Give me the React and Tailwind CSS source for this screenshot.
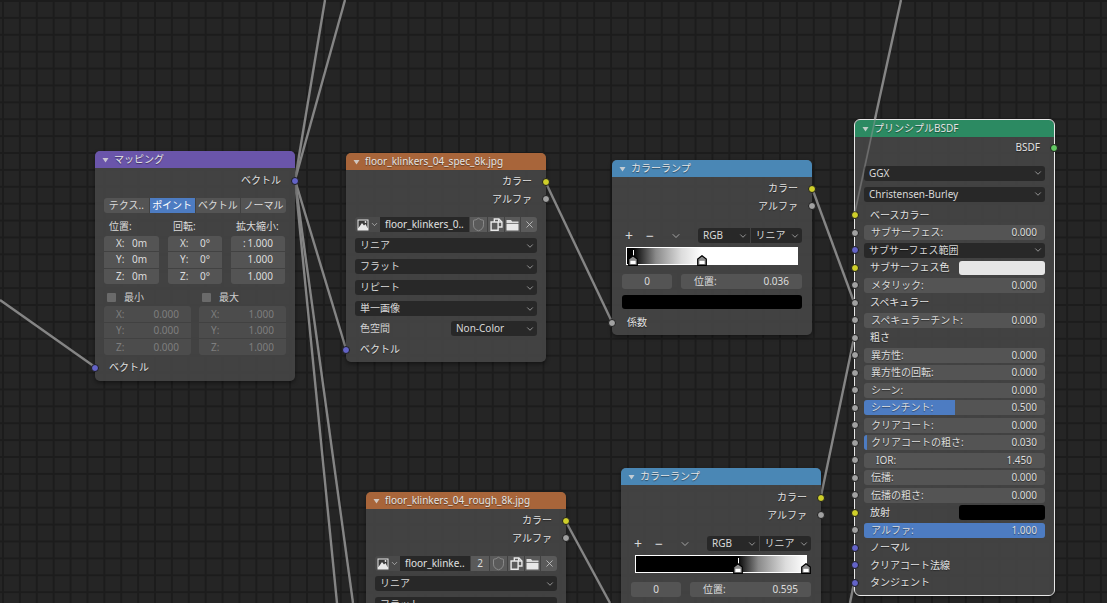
import React from "react";
import { ChevronDown, Shield, X } from "lucide-react";

const font = "font-['Noto_Sans','Noto_Sans_CJK_JP',sans-serif]";

function Tri() {
  return (
    <svg width="7" height="6" viewBox="0 0 7 6" className="shrink-0">
      <polygon points="0.5,1 6.5,1 3.5,5.5" fill="#d8d8d8" fillOpacity="0.85" />
    </svg>
  );
}

function Header({ color, title }) {
  return (
    <div className={`flex h-[17px] shrink-0 items-center gap-[5px] rounded-t-[5px] pl-[7px] text-[10px] text-[#e4e4e4] [text-shadow:0_1px_1px_rgba(0,0,0,0.45)] ${color}`}>
      <Tri />
      <span className="whitespace-nowrap">{title}</span>
    </div>
  );
}

function Socket({ side, color }) {
  const pos = side === "in" ? "left-[-4px]" : "right-[-4px]";
  return <span className={`absolute top-1/2 z-10 h-[8px] w-[8px] -translate-y-1/2 rounded-full border border-[#1e1e1e] ${pos} ${color}`} />;
}

const Y = "bg-[#cfcf2a]";
const G = "bg-[#a1a1a1]";
const B = "bg-[#6363c7]";
const GR = "bg-[#63c763]";

function Row({ side, color, className = "", children }) {
  return (
    <div className={`relative flex h-[17.5px] shrink-0 items-center px-[9px] text-[10px] text-[#e2e2e2] [text-shadow:0_1px_1px_rgba(0,0,0,0.45)] ${className}`}>
      {side && <Socket side={side} color={color} />}
      {children}
    </div>
  );
}

function Out({ label, color, pad = "pr-[14px]" }) {
  return (
    <Row side="out" color={color} className={`justify-end ${pad}`}>
      <span>{label}</span>
    </Row>
  );
}

function Drop({ label, className = "" }) {
  return (
    <div className={`flex h-[15px] items-center justify-between rounded-[3px] bg-[#282828] pl-[5px] pr-[2px] text-[10px] text-[#d8d8d8] ${className}`}>
      <span className="whitespace-nowrap">{label}</span>
      <ChevronDown size={10} strokeWidth={1.6} className="shrink-0 text-[#c8c8c8]" />
    </div>
  );
}

function Field({ label, value, fill, className = "", pad = "pl-[7px] pr-[8px]" }) {
  return (
    <div className={`relative flex h-[15px] w-full items-center justify-between overflow-hidden rounded-[3px] bg-[#545454] text-[10px] text-[#dcdcdc] ${pad} ${className}`}>
      {fill && <span className={`absolute inset-y-0 left-0 bg-[#4d7cc2] ${fill}`} />}
      <span className="relative whitespace-nowrap">{label}</span>
      <span className="relative">{value}</span>
    </div>
  );
}

function Stack({ cells, dim }) {
  return (
    <div className="flex flex-col gap-px overflow-hidden rounded-[3px]">
      {cells.map((c, i) => (
        <div key={i} className={`flex h-[15.6px] items-center justify-between px-[12px] text-[10px] ${dim ? "bg-[#4c4c4c] text-[#7e7e7e]" : "bg-[#545454] text-[#dcdcdc]"}`}>
          <span>{c[0]}</span>
          <span className="pr-0">{c[1]}</span>
        </div>
      ))}
    </div>
  );
}

function ImgIcon() {
  return (
    <svg width="12" height="12" viewBox="0 0 12 12">
      <rect x="0.5" y="0.5" width="11" height="11" fill="#e8e8e8" />
      <rect x="1.5" y="1.5" width="9" height="7.5" fill="#3a3a3a" />
      <polygon points="1.5,9 5,4 7,6.5 8.5,5 10.5,9" fill="#e8e8e8" />
      <circle cx="8.5" cy="3" r="0.9" fill="#e8e8e8" />
    </svg>
  );
}

function CopyIcon() {
  return (
    <svg width="13" height="13" viewBox="0 0 12 12" fill="none" stroke="#e8e8e8" strokeWidth="1.3">
      <path d="M1 3.7h6.5v7.6H1z" />
      <path d="M4 3.7V0.9h4.2l2.8 2.8v4.6H7.5" />
      <path d="M8 0.9v2.8h3" />
    </svg>
  );
}

function FolderIcon() {
  return (
    <svg width="13" height="12" viewBox="0 0 13 12">
      <path d="M0.5 1h4.5l1.2 1.5h6.3v1.5H0.5z" fill="#dcdcdc" />
      <path d="M0.5 4.8h12V11.5H0.5z" fill="#e8e8e8" />
    </svg>
  );
}

function ImageRow({ name, users, nameW }) {
  const btn = "flex h-[15px] items-center justify-center bg-[#5a5a5a]";
  return (
    <div className="flex h-[15px] overflow-hidden rounded-[3px] text-[10px]">
      <div className="flex w-[25px] items-center justify-center gap-px bg-[#4a4a4a]">
        <ImgIcon />
        <ChevronDown size={9} strokeWidth={1.6} className="text-[#d8d8d8]" />
      </div>
      <div className={`flex items-center bg-[#282828] pl-[5px] text-[#e0e0e0] whitespace-nowrap ${nameW}`}>{name}</div>
      {users && <div className={`${btn} ml-px w-[18px] text-[#dcdcdc]`}>{users}</div>}
      <div className={`${btn} ml-px w-[17px]`}><Shield size={15} strokeWidth={1.2} className="text-[#9a9a9a]" /></div>
      <div className={`${btn} ml-px w-[16px]`}><CopyIcon /></div>
      <div className={`${btn} ml-px w-[15px]`}><FolderIcon /></div>
      <div className={`${btn} ml-px flex-1`}><X size={11} strokeWidth={1.8} className="text-[#c8c8c8]" /></div>
    </div>
  );
}

function Handle({ className, active }) {
  return (
    <span className={`absolute bottom-[-2px] flex w-[10px] flex-col items-center ${className}`}>
      {active && <span className="mb-[-1px] h-[6px] border-l border-dashed border-white" />}
      <svg width="10" height="11" viewBox="0 0 10 11">
        <path d="M5 0.7 L9.3 4 V10.3 H0.7 V4 Z" fill="#8a8a8a" stroke="#000" strokeWidth="1.2" />
        <rect x="2.4" y="5.8" width="5.2" height="3.2" fill="#fff" />
      </svg>
    </span>
  );
}

function RampControls({ gradient, h1, h2, pos, top }) {
  return (
    <>
      <div className={`flex h-[15px] items-center px-[10px] text-[#d8d8d8] ${top}`}>
        <div className="flex w-[76px] items-center">
          <span className="w-[20px] pl-[3px] text-[14px] leading-none">+</span>
          <span className="w-[26px] pl-[4px] text-[14px] leading-none">−</span>
          <ChevronDown size={12} strokeWidth={1.6} className="ml-[2px] text-[#bdbdbd]" />
        </div>
        <div className="flex flex-1 gap-px">
          <Drop label="RGB" className="flex-1 rounded-r-none" />
          <Drop label="リニア" className="flex-1 rounded-l-none" />
        </div>
      </div>
      <div className="mx-[14px] mt-[4px]">
        <div className={`relative h-[18px] border border-white ${gradient}`}>
          {h1}
          {h2}
        </div>
      </div>
      <div className="mt-[9px] flex gap-[9px] px-[10px]">
        <div className="flex h-[15px] w-[50px] items-center justify-center rounded-[3px] bg-[#545454] text-[10px] text-[#dcdcdc]">0</div>
        <div className="flex-1"><Field label="位置:" value={pos} pad="px-[13px]" /></div>
      </div>
    </>
  );
}

function Node({ className, selected, children }) {
  return (
    <div className={`absolute z-10 flex flex-col rounded-[5px] bg-[#434343]/95 shadow-[0_2px_4px_rgba(0,0,0,0.45)] ${selected ? "outline outline-1 outline-[#e8e8e8]" : ""} ${className}`}>
      {children}
    </div>
  );
}

function Mapping() {
  const seg = "flex h-[15px] flex-1 items-center justify-center whitespace-nowrap text-[10px]";
  return (
    <Node className="left-[95px] top-[151px] h-[230px] w-[200px]">
      <Header color="bg-[#6a55aa]" title="マッピング" />
      <div className="mt-[4px]"><Out label="ベクトル" color={B} /></div>
      <div className="mx-[9px] mt-[8px] flex gap-px overflow-hidden rounded-[3px] text-[#dcdcdc]">
        <div className={`${seg} bg-[#545454]`}>テクス..</div>
        <div className={`${seg} bg-[#4d7cc2] text-white`}>ポイント</div>
        <div className={`${seg} bg-[#545454]`}>ベクトル</div>
        <div className={`${seg} bg-[#545454]`}>ノーマル</div>
      </div>
      <div className="mt-[6px] grid grid-cols-[55px_54px_54px] gap-x-[9px] px-[9px] text-[10px] text-[#dcdcdc]">
        <span className="h-[17px] pl-[5px] leading-[15px]">位置:</span>
        <span className="h-[17px] pl-[5px] leading-[15px]">回転:</span>
        <span className="h-[17px] whitespace-nowrap pl-[5px] leading-[15px]">拡大縮小:</span>
        <Stack cells={[["X:", "0m"], ["Y:", "0m"], ["Z:", "0m"]]} />
        <Stack cells={[["X:", "0°"], ["Y:", "0°"], ["Z:", "0°"]]} />
        <Stack cells={[[":", "1.000"], ["", "1.000"], ["", "1.000"]]} />
      </div>
      <div className="mt-[6px] grid grid-cols-2 gap-x-[8px] px-[9px] text-[10px] text-[#cfcfcf]">
        <div className="flex h-[15px] items-center gap-[8px] pl-[3px]"><span className="h-[9px] w-[9px] rounded-[1px] bg-[#6a6a6a]" />最小</div>
        <div className="flex h-[15px] items-center gap-[8px] pl-[3px]"><span className="h-[9px] w-[9px] rounded-[1px] bg-[#6a6a6a]" />最大</div>
      </div>
      <div className="mt-[1px] grid grid-cols-2 gap-x-[8px] px-[9px]">
        <Stack dim cells={[["X:", "0.000"], ["Y:", "0.000"], ["Z:", "0.000"]]} />
        <Stack dim cells={[["X:", "1.000"], ["Y:", "1.000"], ["Z:", "1.000"]]} />
      </div>
      <div className="mt-[4px]"><Row side="in" color={B} className="pl-[14px]">ベクトル</Row></div>
    </Node>
  );
}

function SpecTexture() {
  return (
    <Node className="left-[346px] top-[153px] h-[209px] w-[200px]">
      <Header color="bg-[#a8653a]" title="floor_klinkers_04_spec_8k.jpg" />
      <div className="mt-[3px]"><Out label="カラー" color={Y} /></div>
      <Out label="アルファ" color={G} />
      <div className="mx-[9px] mt-[9px]"><ImageRow name="floor_klinkers_0.." nameW="w-[89px]" /></div>
      <div className="mx-[9px] mt-[6px] flex flex-col gap-[6px]">
        <Drop label="リニア" />
        <Drop label="フラット" />
        <Drop label="リピート" />
        <Drop label="単一画像" />
      </div>
      <div className="mx-[9px] mt-[5px] flex items-center justify-between text-[10px] text-[#d0d0d0]">
        <span className="pl-[5px]">色空間</span>
        <Drop label="Non-Color" className="w-[86px]" />
      </div>
      <div className="mt-[5px]"><Row side="in" color={B} className="pl-[14px]">ベクトル</Row></div>
    </Node>
  );
}

function RoughTexture() {
  return (
    <Node className="left-[366px] top-[492px] h-[130px] w-[200px]">
      <Header color="bg-[#a8653a]" title="floor_klinkers_04_rough_8k.jpg" />
      <div className="mt-[3px]"><Out label="カラー" color={Y} /></div>
      <Out label="アルファ" color={G} />
      <div className="mx-[9px] mt-[9px]"><ImageRow name="floor_klinke.." users="2" nameW="w-[70px]" /></div>
      <div className="mx-[9px] mt-[5px] flex flex-col gap-[6px]">
        <Drop label="リニア" />
        <Drop label="フラット" />
      </div>
    </Node>
  );
}

function RampTop() {
  return (
    <Node className="left-[612px] top-[160px] h-[175px] w-[200px]">
      <Header color="bg-[#4a87b5]" title="カラーランプ" />
      <div className="mt-[3px]"><Out label="カラー" color={Y} /></div>
      <Out label="アルファ" color={G} />
      <RampControls
        top="mt-[13px]"
        pos="0.036"
        gradient="bg-[linear-gradient(90deg,#000_3.6%,#8a8a8a_17%,#dcdcdc_32%,#fff_44%)]"
        h1={<Handle active className="left-[1px]" />}
        h2={<Handle className="left-[70px]" />}
      />
      <div className="mx-[10px] mt-[6px] h-[14px] rounded-[3px] bg-black" />
      <div className="mt-[5px]"><Row side="in" color={G} className="pl-[15px]">係数</Row></div>
    </Node>
  );
}

function RampBottom() {
  return (
    <Node className="left-[621px] top-[468px] h-[160px] w-[200px]">
      <Header color="bg-[#4a87b5]" title="カラーランプ" />
      <div className="mt-[4px]"><Out label="カラー" color={Y} /></div>
      <Out label="アルファ" color={G} />
      <RampControls
        top="mt-[12px]"
        pos="0.595"
        gradient="bg-[linear-gradient(90deg,#000_59.5%,#8a8a8a_72%,#dcdcdc_88%,#fff_100%)]"
        h1={<Handle active className="left-[97px]" />}
        h2={<Handle className="right-[-5px]" />}
      />
    </Node>
  );
}

function Bsdf() {
  const f = (label, value, fill, pad) => <Field label={label} value={value} fill={fill} pad={pad} />;
  return (
    <Node selected className="left-[855px] top-[120px] h-[475px] w-[199px]">
      <Header color="bg-[#2c8a62]" title="プリンシプルBSDF" />
      <div className="mt-[2px]"><Out label="BSDF" color={GR} /></div>
      <div className="mx-[9px] mt-[9px] flex flex-col gap-[6px]">
        <Drop label="GGX" />
        <Drop label="Christensen-Burley" />
      </div>
      <div className="mt-[5px] flex flex-col">
        <Row side="in" color={Y} className="pl-[15px]">ベースカラー</Row>
        <Row side="in" color={G}>{f("サブサーフェス:", "0.000")}</Row>
        <Row side="in" color={B}><Drop label="サブサーフェス範囲" className="w-full" /></Row>
        <Row side="in" color={Y} className="justify-between">
          <span className="pl-[6px]">サブサーフェス色</span>
          <span className="h-[14px] w-[86px] rounded-[3px] bg-[#e6e6e6]" />
        </Row>
        <Row side="in" color={G}>{f("メタリック:", "0.000")}</Row>
        <Row side="in" color={G} className="pl-[15px]">スペキュラー</Row>
        <Row side="in" color={G}>{f("スペキュラーチント:", "0.000")}</Row>
        <Row side="in" color={G} className="pl-[15px]">粗さ</Row>
        <Row side="in" color={G}>{f("異方性:", "0.000")}</Row>
        <Row side="in" color={G}>{f("異方性の回転:", "0.000")}</Row>
        <Row side="in" color={G}>{f("シーン:", "0.000")}</Row>
        <Row side="in" color={G}>{f("シーンチント:", "0.500", "w-1/2")}</Row>
        <Row side="in" color={G}>{f("クリアコート:", "0.000")}</Row>
        <Row side="in" color={G}>{f("クリアコートの粗さ:", "0.030", "w-[3px]")}</Row>
        <Row side="in" color={G}>{f("IOR:", "1.450", null, "pl-[12px] pr-[13px]")}</Row>
        <Row side="in" color={G}>{f("伝播:", "0.000")}</Row>
        <Row side="in" color={G}>{f("伝播の粗さ:", "0.000")}</Row>
        <Row side="in" color={Y} className="justify-between">
          <span className="pl-[6px]">放射</span>
          <span className="h-[15px] w-[86px] rounded-[3px] bg-black" />
        </Row>
        <Row side="in" color={G}>{f("アルファ:", "1.000", "w-full")}</Row>
        <Row side="in" color={B} className="pl-[15px]">ノーマル</Row>
        <Row side="in" color={B} className="pl-[15px]">クリアコート法線</Row>
        <Row side="in" color={B} className="pl-[15px]">タンジェント</Row>
      </div>
    </Node>
  );
}

const wires = [
  [295, 180, 325, 0],
  [295, 180, 345, 0],
  [295, 180, 346, 349],
  [295, 180, 337, 603],
  [295, 180, 353, 603],
  [0, 300, 95, 367],
  [545, 181, 612, 322],
  [565, 520, 610, 603],
  [812, 188, 854, 302],
  [821, 496, 854, 338],
  [854, 215, 901, 0],
  [854, 583, 850, 603],
];

export default function App() {
  return (
    <div className={`relative h-[603px] w-[1107px] overflow-hidden bg-[#252525] bg-[image:linear-gradient(#1c1c1c_1.5px,transparent_1.5px),linear-gradient(90deg,#1c1c1c_1.5px,transparent_1.5px)] bg-[size:16.9px_16.9px] bg-[position:2px_0px] ${font}`}>
      <svg className="absolute inset-0" width="1107" height="603">
        {wires.map((w, i) => (
          <line key={i} x1={w[0]} y1={w[1]} x2={w[2]} y2={w[3]} stroke="#858585" strokeWidth="2.4" />
        ))}
      </svg>
      <Mapping />
      <SpecTexture />
      <RoughTexture />
      <RampTop />
      <RampBottom />
      <Bsdf />
      <svg className="absolute inset-0 z-20" width="1107" height="603">
        <line x1="855" y1="212" x2="876" y2="115" stroke="#9a9a9a" strokeOpacity="0.45" strokeWidth="1.6" />
      </svg>
    </div>
  );
}
